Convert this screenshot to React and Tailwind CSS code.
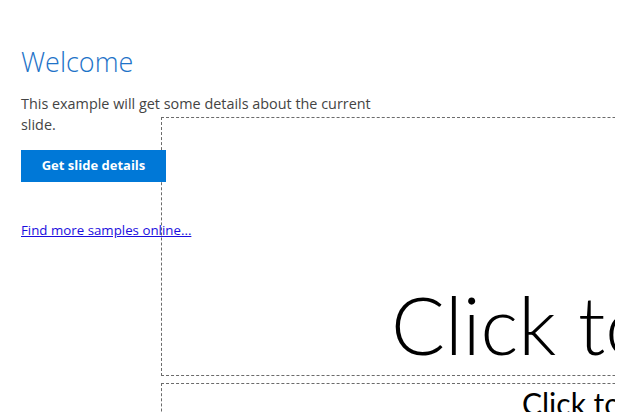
import React from 'react';

const font = { fontFamily: '"Open Sans", "Noto Sans", sans-serif' };

const SlidePlaceholders = () => (
  <div className="absolute inset-0 overflow-hidden pointer-events-none" style={{ fontFamily: '"Lato", "Open Sans", sans-serif' }}>
    <div className="absolute left-[161px] top-[117px] w-[600px] h-[259px] border border-dashed border-[#6b6b6b]">
      <div className="absolute left-[229px] top-[166px] text-[80px] leading-none font-light text-black whitespace-nowrap">
        Click to add title
      </div>
    </div>
    <div className="absolute left-[161px] top-[383px] w-[600px] h-[100px] border border-dashed border-[#6b6b6b]">
      <div className="absolute left-[360px] top-[4px] text-[30px] leading-none text-black whitespace-nowrap">
        Click to add subtitle
      </div>
    </div>
  </div>
);

const App = () => {
  return (
    <div className="relative w-[617px] h-[412px] bg-white overflow-hidden">
      <div className="absolute inset-y-0 left-0 w-[615px] overflow-hidden">
        <SlidePlaceholders />
      </div>
      <div className="relative flex flex-col items-start pl-[21px] pt-[44px] w-[385px]" style={font}>
        <h1 className="text-[27px] leading-[36px] font-light text-[#1e73c8]">Welcome</h1>
        <p className="mt-[13px] text-[14.4px] leading-[21px] text-[#444]">
          This example will get some details about the current slide.
        </p>
        <button className="mt-[15px] w-[145px] h-[32px] bg-[#0078d7] text-white text-[13px] font-bold">
          Get slide details
        </button>
        <a href="#" className="mt-[39px] text-[13.3px] leading-[18px] text-[#1a0dde] underline">
          Find more samples online...
        </a>
      </div>
    </div>
  );
};

export default App;
